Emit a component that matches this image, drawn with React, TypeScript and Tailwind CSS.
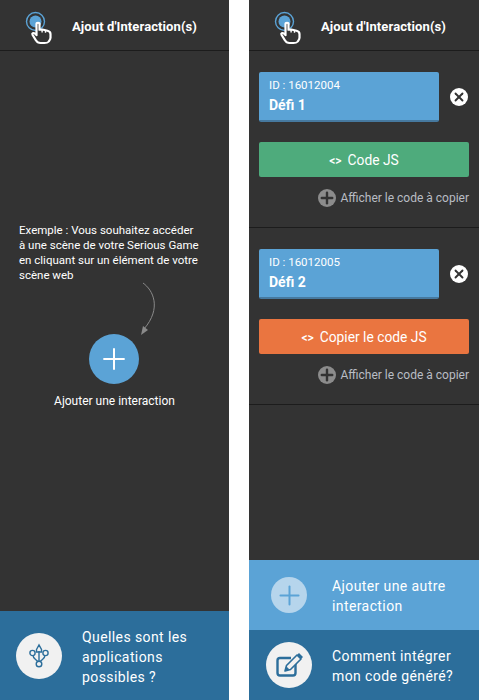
import { Plus, X } from "lucide-react";

const font = "font-['Roboto',sans-serif]";

function Header() {
  return (
    <div className="flex h-[51px] shrink-0 items-center border-b border-b-[#1c1c1c]">
      <svg width="36" height="40" viewBox="0 0 36 40" fill="none" className="ml-[22px] mt-[2px] shrink-0">
        <circle cx="13.5" cy="15.5" r="9" stroke="#5ba3d6" strokeWidth="1.4" />
        <circle cx="13.5" cy="15.5" r="6" fill="#5ba3d6" />
        <g transform="translate(1.5 5.4) scale(1 0.88)">
          <path
            d="M12.5 33 L9 26.5 C8.2 25 10 23.8 11.2 25 L13 27 L13 14.5 C13 12.4 16 12.4 16 14.5 L16 21 L18.5 20.6 L21 21.2 L24 22 C26 22.6 27 23.6 27 25.6 L27 30 C27 32 26 33 25 34.5 C24 35.8 22.5 36 21 36 L17 36 C15 36 13.5 35 12.5 33 Z"
            fill="#333333"
            stroke="#ffffff"
            strokeWidth="2.2"
            strokeLinejoin="round"
          />
          <path d="M18.6 20.8 V24 M22 21.6 V24.4" stroke="#ffffff" strokeWidth="1.4" />
        </g>
      </svg>
      <span className="ml-[14px] mt-[3px] text-[13px] font-bold tracking-[0.1px] text-white">
        Ajout d'Interaction(s)
      </span>
    </div>
  );
}

function FirstPanel() {
  return (
    <div className="flex h-[700px] w-[229px] shrink-0 flex-col bg-[#333333]">
      <Header />
      <div className="flex flex-1 flex-col pt-[172px]">
        <p className="pl-[19px] text-[11.5px] leading-[15px] text-white">
          Exemple : Vous souhaitez accéder
          <br />à une scène de votre Serious Game
          <br />
          en cliquant sur un élément de votre
          <br />
          scène web
        </p>
        <svg width="24" height="54" viewBox="0 0 24 54" fill="none" className="ml-[139px] mt-[-1px]">
          <path d="M4 1 C14 8 23 26 5 47" stroke="#8a8a8a" strokeWidth="1" />
          <path d="M2 53 L4 44 L9 48 Z" fill="#8a8a8a" />
        </svg>
        <div className="ml-[89px] mt-[-2px] flex h-[50px] w-[50px] items-center justify-center rounded-full bg-[#5ba3d6]">
          <Plus size={34} color="#ffffff" strokeWidth={2} absoluteStrokeWidth />
        </div>
        <p className="mt-[9px] text-center text-[12px] leading-[16px] text-white">Ajouter une interaction</p>
      </div>
      <div className="flex h-[89px] shrink-0 items-center bg-[#2c6e9b] pl-[16px]">
        <div className="flex h-[46px] w-[46px] shrink-0 items-center justify-center rounded-full bg-[#f1f1f1]">
          <svg width="20" height="26" viewBox="0 0 20 26" fill="none" stroke="#2c6e9b" strokeWidth="1.4">
            <path d="M10 8 V19 M4 12 C4 16 7 16 9 19 M16 12 C16 16 13 16 11 19" />
            <path d="M7.5 6.5 L10 2 L12.5 6.5 V9 H7.5 Z" />
            <circle cx="3.5" cy="10" r="2.6" />
            <circle cx="16.5" cy="10" r="2.6" />
            <circle cx="10" cy="21" r="2.8" />
          </svg>
        </div>
        <p className="ml-[20px] mt-[2px] text-[14px] leading-[20px] tracking-[0.4px] text-white">
          Quelles sont les
          <br />
          applications
          <br />
          possibles ?
        </p>
      </div>
    </div>
  );
}

type DefiProps = {
  id: string;
  name: string;
  label: string;
  color: string;
};

function Defi({ id, name, label, color }: DefiProps) {
  return (
    <div className="h-[177px] shrink-0 border-b border-b-[#1c1c1c] pl-[10px] pr-[10px] pt-[21px]">
      <div className="flex items-center">
        <div className="flex h-[50px] w-[180px] shrink-0 flex-col rounded-[2px] border-b-2 border-b-[#46799f] bg-[#5ba3d6] pl-[10px] pt-[6px]">
          <span className="text-[11.5px] leading-[15px] text-white">{id}</span>
          <span className="mt-[4px] text-[14px] font-bold leading-[17px] text-white">{name}</span>
        </div>
        <div className="ml-[11px] flex h-[18px] w-[18px] items-center justify-center rounded-full bg-white">
          <X size={14} color="#333333" strokeWidth={3.2} />
        </div>
      </div>
      <div
        className={`mt-[20px] flex h-[35px] items-center justify-center rounded-[2px] pt-[2px] text-[13.8px] text-white ${color}`}
      >
        <span className="mr-[6px] text-[12px] font-medium">&lt;&gt;</span>
        {label}
      </div>
      <div className="mt-[12px] flex items-center justify-end">
        <div className="flex h-[18px] w-[18px] items-center justify-center rounded-full bg-[#8c8c8c]">
          <Plus size={18} color="#333333" strokeWidth={2.4} absoluteStrokeWidth />
        </div>
        <span className="ml-[4px] text-[12px] leading-[18px] text-[#b9bdc4]">Afficher le code à copier</span>
      </div>
    </div>
  );
}

function SecondPanel() {
  return (
    <div className="flex h-[700px] w-[230px] shrink-0 flex-col bg-[#333333]">
      <Header />
      <Defi id="ID : 16012004" name="Défi 1" label="Code JS" color="bg-[#4eab7c]" />
      <Defi id="ID : 16012005" name="Défi 2" label="Copier le code JS" color="bg-[#ea7540]" />
      <div className="flex-1" />
      <div className="flex h-[70px] shrink-0 items-center bg-[#5ba3d6] pl-[22px]">
        <div className="flex h-[36px] w-[36px] shrink-0 items-center justify-center rounded-full bg-[#b6d5ec]">
          <Plus size={31} color="#5ba3d6" strokeWidth={2} absoluteStrokeWidth />
        </div>
        <p className="ml-[25px] mt-[2px] text-[14px] leading-[20px] tracking-[0.4px] text-white">
          Ajouter une autre
          <br />
          interaction
        </p>
      </div>
      <div className="flex h-[70px] shrink-0 items-center bg-[#2c6e9b] pl-[17px]">
        <div className="flex h-[46px] w-[46px] shrink-0 items-center justify-center rounded-full bg-[#f1f1f1]">
          <svg width="30" height="30" viewBox="0 0 30 30" fill="none">
            <path
              d="M17 8 H6 C4.5 8 3.5 9 3.5 10.5 V23 C3.5 24.5 4.5 25.5 6 25.5 H19 C20.5 25.5 21.5 24.5 21.5 23 V14"
              stroke="#2c6e9b"
              strokeWidth="2.4"
            />
            <path
              d="M11 21 L12.5 15.5 L23 5 L27 9 L16.5 19.5 Z"
              fill="#f1f1f1"
              stroke="#2c6e9b"
              strokeWidth="1.6"
              strokeLinejoin="round"
            />
            <path d="M11 21 L12.5 16.5 L15.5 19.5 Z" fill="#2c6e9b" />
            <path d="M23 5 L25 3 L29 7 L27 9 Z" fill="#2c6e9b" />
          </svg>
        </div>
        <p className="ml-[20px] mt-[2px] text-[14px] leading-[20px] tracking-[0.4px] text-white">
          Comment intégrer
          <br />
          mon code généré?
        </p>
      </div>
    </div>
  );
}

export default function App() {
  return (
    <main className={`flex h-[700px] w-[479px] gap-[20px] overflow-hidden bg-white ${font}`}>
      <FirstPanel />
      <SecondPanel />
    </main>
  );
}
